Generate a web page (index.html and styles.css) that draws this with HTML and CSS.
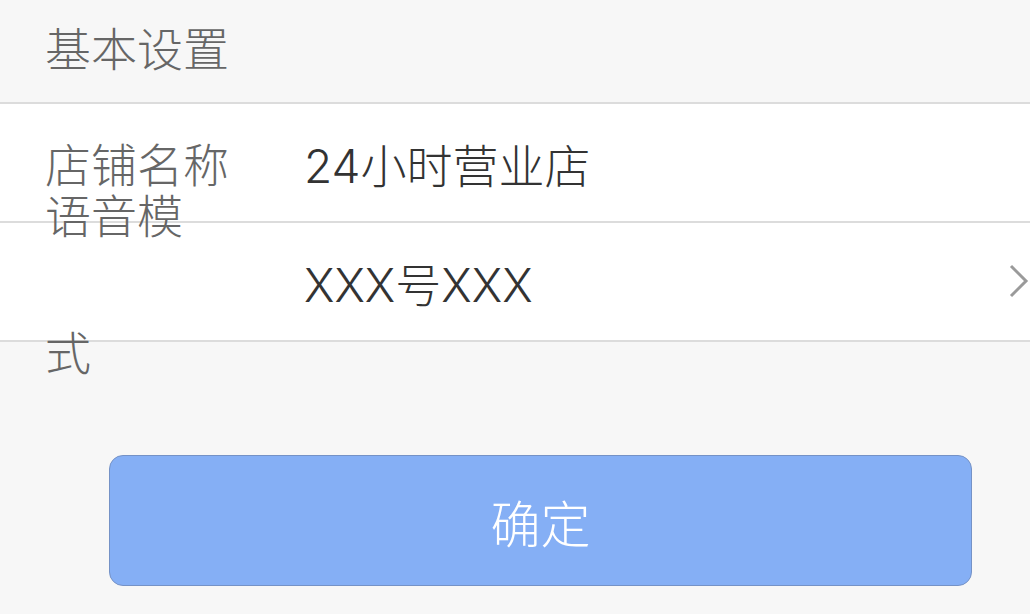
FILE: index.html
```html
<!DOCTYPE html>
<html lang="zh-CN">
<head>
    <meta charset="UTF-8">
    <meta name="viewport" content="width=device-width, initial-scale=1.0">
    <title>基本设置</title>
    <link rel="stylesheet" href="styles.css">
</head>
<body>
    <div class="section-title">基本设置</div>

    <div class="list">
        <div class="row">
            <div class="label">店铺名称</div>
            <div class="value">24小时营业店</div>
        </div>
        <div class="row">
            <div class="label">语音模<br>式</div>
            <div class="value">XXX号XXX</div>
            <svg class="arrow" width="24" height="36" viewBox="0 0 24 36">
                <polyline points="4,2 19,17 4,32" fill="none" stroke="#9a9a9a" stroke-width="3"/>
            </svg>
        </div>
    </div>

    <div class="actions">
        <button type="button" class="btn-ok">确定</button>
    </div>
</body>
</html>
```

FILE: styles.css
```css
body {
    margin: 0;
    padding: 0;
    background-color: #f7f7f7;
    font-family: "Noto Sans CJK SC", "Noto Sans", sans-serif;
    font-weight: 300;
    overflow: hidden;
}
.section-title {
    height: 102px;
    padding-left: 45px;
    font-size: 46px;
    line-height: 92px;
    color: #666;
    border-bottom: 2px solid #dcdcdc;
}
.list {
    background-color: white;
}
.row {
    display: flex;
    align-items: center;
    height: 117px;
    border-bottom: 2px solid #dcdcdc;
    padding-left: 45px;
}
.label {
    width: 259px;
    flex-shrink: 0;
    font-size: 46px;
    line-height: 137px;
    color: #666;
}
.value {
    flex: 1;
    font-family: "Inter", "Noto Sans CJK SC", sans-serif;
    font-size: 46px;
    color: #333;
}
.arrow {
    margin-right: -1px;
}
.actions {
    padding: 113px 58px 0 109px;
}
.btn-ok {
    display: block;
    width: 863px;
    height: 131px;
    background-color: #85aff5;
    border: 1px solid #7592c6;
    border-radius: 14px;
    color: white;
    font-family: "Noto Sans CJK SC", "Noto Sans", sans-serif;
    font-weight: 300;
    font-size: 50px;
    padding: 0;
}
```
